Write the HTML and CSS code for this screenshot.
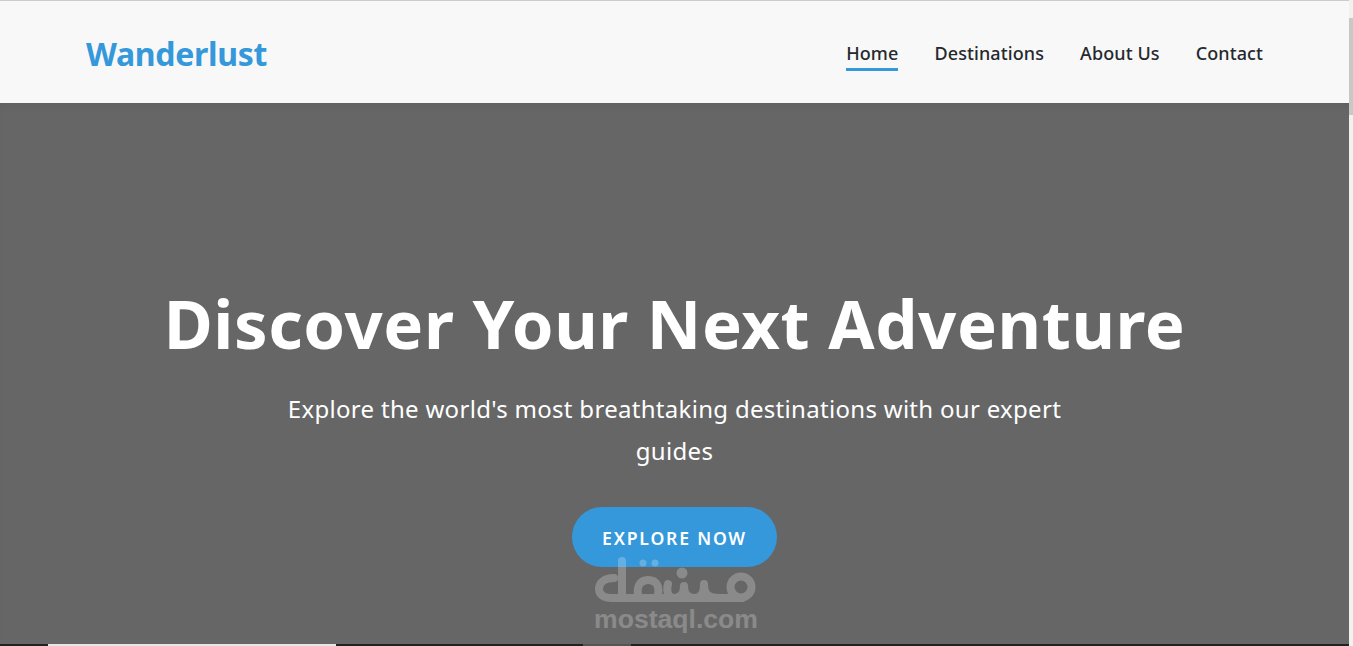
FILE: index.html
```html
<!DOCTYPE html>
<html lang="en">

<head>
    <meta charset="UTF-8">
    <meta name="viewport" content="width=device-width, initial-scale=1.0">
    <title>Wanderlust</title>
    <link rel="stylesheet" href="styles.css">
</head>

<body>
    <div class="page">
        <header class="site-header">
            <a href="#" class="logo">Wanderlust</a>
            <nav class="main-nav">
                <a href="#" class="nav-link active">Home</a>
                <a href="#" class="nav-link">Destinations</a>
                <a href="#" class="nav-link">About Us</a>
                <a href="#" class="nav-link">Contact</a>
            </nav>
        </header>

        <section class="hero">
            <h1 class="hero-title">Discover Your Next Adventure</h1>
            <p class="hero-text">Explore the world's most breathtaking destinations with our expert guides</p>
            <a href="#" class="hero-button">Explore Now</a>

            <!-- Watermark sits over the hero -->
            <div class="watermark">
                <svg class="watermark-logo" width="164" height="50" viewBox="0 0 164 50">
                    <g fill="none" stroke="#fff" stroke-width="8" stroke-linecap="round" stroke-linejoin="round">
                        <path d="M20 22C10 22 5 27 5 33C5 39 10 42 18 42H148" />
                        <path d="M28 5V42" />
                        <path d="M45 42C41 30 47 24 54 24C62 24 67 30 63 42" />
                        <path d="M74 28C72 35 74 42 80 42C88 42 90 36 90 30C90 38 94 42 100 42C108 42 110 36 110 28C110 38 114 42 126 42" />
                        <circle cx="147" cy="31" r="10.5" />
                    </g>
                    <g fill="#fff">
                        <circle cx="49" cy="7" r="3.5" />
                        <circle cx="61" cy="7" r="3.5" />
                        <circle cx="88" cy="17" r="5.5" />
                    </g>
                </svg>
                <span class="watermark-text">mostaql.com</span>
            </div>
        </section>

        <!-- Bits of the next window along the bottom edge -->
        <div class="bottom-strip">
            <span class="strip-light"></span>
            <span class="strip-grey"></span>
        </div>
    </div>

    <div class="scroll-track">
        <div class="scroll-thumb"></div>
    </div>
</body>

</html>
```

FILE: styles.css
```css
* {
    box-sizing: border-box;
}

html,
body {
    height: 100%;
}

body {
    margin: 0;
    padding: 0;
    font-family: "Noto Sans", "Open Sans", Arial, sans-serif;
    background-color: #f1f1f1;
    overflow: hidden;
    display: flex;
}

.page {
    flex: 1;
    display: flex;
    flex-direction: column;
    height: 646px;
    border-top: 1px solid #cccccc;
}

.site-header {
    height: 102px;
    padding: 2px 86px 0 86px;
    background-color: #f8f8f8;
    display: flex;
    justify-content: space-between;
    align-items: center;
}

.logo {
    color: #3498db;
    font-size: 32px;
    font-weight: 700;
    letter-spacing: -0.3px;
    text-decoration: none;
}

.main-nav {
    display: flex;
    gap: 36px;
}

.nav-link {
    color: #25292e;
    font-size: 18px;
    font-weight: 500;
    letter-spacing: 0.1px;
    text-decoration: none;
    padding: 5px 0 3px;
    border-bottom: 3px solid transparent;
}

.nav-link.active {
    border-bottom-color: #3498db;
}

.hero {
    position: relative;
    flex: 1;
    background-color: #666666;
    color: #ffffff;
    display: flex;
    flex-direction: column;
    align-items: center;
    padding-top: 176px;
    box-shadow: inset 0 8px 8px -6px rgba(0, 0, 0, 0.08);
}

.hero-title {
    margin: 0;
    font-size: 67px;
    line-height: 88px;
    font-weight: 700;
    letter-spacing: 0.6px;
}

.hero-text {
    width: 800px;
    margin: 21px 0 0;
    font-size: 24px;
    line-height: 42px;
    letter-spacing: 0.3px;
    text-align: center;
}

.hero-button {
    margin-top: 35px;
    width: 205px;
    height: 60px;
    padding-top: 2px;
    border-radius: 30px;
    background-color: #3498db;
    color: #ffffff;
    font-size: 17.6px;
    font-weight: 600;
    letter-spacing: 1.8px;
    text-transform: uppercase;
    text-decoration: none;
    display: flex;
    align-items: center;
    justify-content: center;
}

.watermark {
    position: absolute;
    left: 594px;
    top: 453px;
    width: 164px;
    display: flex;
    flex-direction: column;
    align-items: center;
    opacity: 0.235;
}

.watermark-logo {
    display: block;
}

.watermark-text {
    margin-top: -2px;
    color: #ffffff;
    font-family: "Liberation Sans", Arial, sans-serif;
    font-size: 26.6px;
    font-weight: 700;
    line-height: 30px;
}

.bottom-strip {
    height: 2px;
    background-color: #202124;
    display: flex;
    padding-left: 48px;
}

.strip-light {
    width: 288px;
    background-color: #e6e6e6;
}

.strip-grey {
    width: 48px;
    margin-left: 247px;
    background-color: #555555;
}

.scroll-track {
    width: 4px;
    height: 646px;
    background-color: #f1f1f1;
    padding-top: 18px;
}

.scroll-thumb {
    height: 97px;
    background-color: #c8c8c8;
}
```
